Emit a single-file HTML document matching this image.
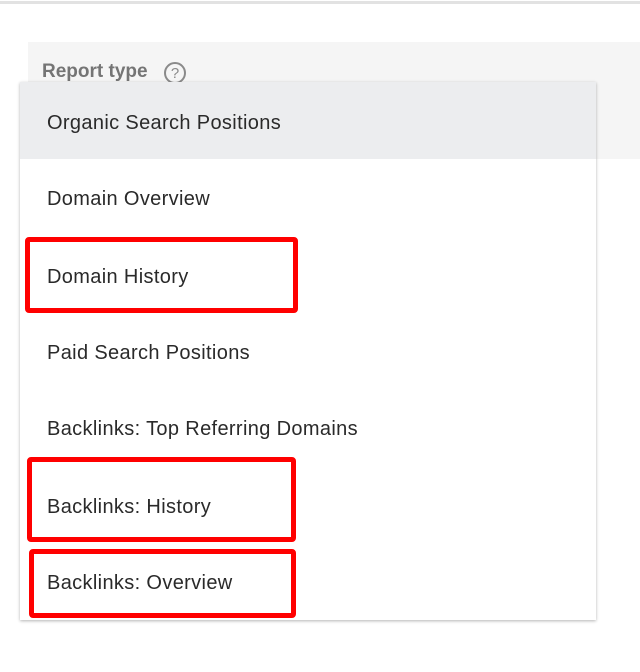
<!DOCTYPE html>
<html><head><style>
body{margin:0;width:640px;height:672px;background:#fff;position:relative;overflow:hidden;font-family:"Liberation Sans",Arial,sans-serif;}
.top{position:absolute;left:0;top:1px;width:640px;height:3px;background:#e2e2e2;}
.panel{position:absolute;left:28px;top:42px;width:612px;height:117px;background:#f5f5f5;}
.label{position:absolute;left:42px;top:61px;font-size:19px;font-weight:bold;color:#757575;letter-spacing:0px;}
.q{position:absolute;left:164px;top:62px;width:22px;height:22px;border:2px solid #8a8a8a;border-radius:50%;box-sizing:border-box;font-size:15px;color:#8a8a8a;text-align:center;line-height:19px;}
.menu{position:absolute;left:20px;top:82px;width:576px;height:538px;background:#fff;box-shadow:0 1px 3px rgba(0,0,0,.3);}
.item{position:absolute;left:27px;font-size:20px;color:#2a2a2a;line-height:24px;letter-spacing:0.35px;}
.sel{position:absolute;left:0;top:0;width:576px;height:77px;background:#ecedef;}
.box{position:absolute;border:5px solid #ff0000;border-radius:4px;box-sizing:border-box;}
</style></head><body>
<div class="top"></div>
<div class="panel"></div>
<div class="label">Report type</div>
<div class="q">?</div>
<div class="menu">
<div class="sel"></div>
<div class="item" style="top:29px">Organic Search Positions</div>
<div class="item" style="top:105px">Domain Overview</div>
<div class="item" style="top:183px">Domain History</div>
<div class="item" style="top:259px">Paid Search Positions</div>
<div class="item" style="top:335px">Backlinks: Top Referring Domains</div>
<div class="item" style="top:413px">Backlinks: History</div>
<div class="item" style="top:489px">Backlinks: Overview</div>
</div>
<div class="box" style="left:25px;top:237px;width:273px;height:76px"></div>
<div class="box" style="left:27px;top:457px;width:269px;height:85px"></div>
<div class="box" style="left:29px;top:549px;width:267px;height:69px"></div>
</body></html>
